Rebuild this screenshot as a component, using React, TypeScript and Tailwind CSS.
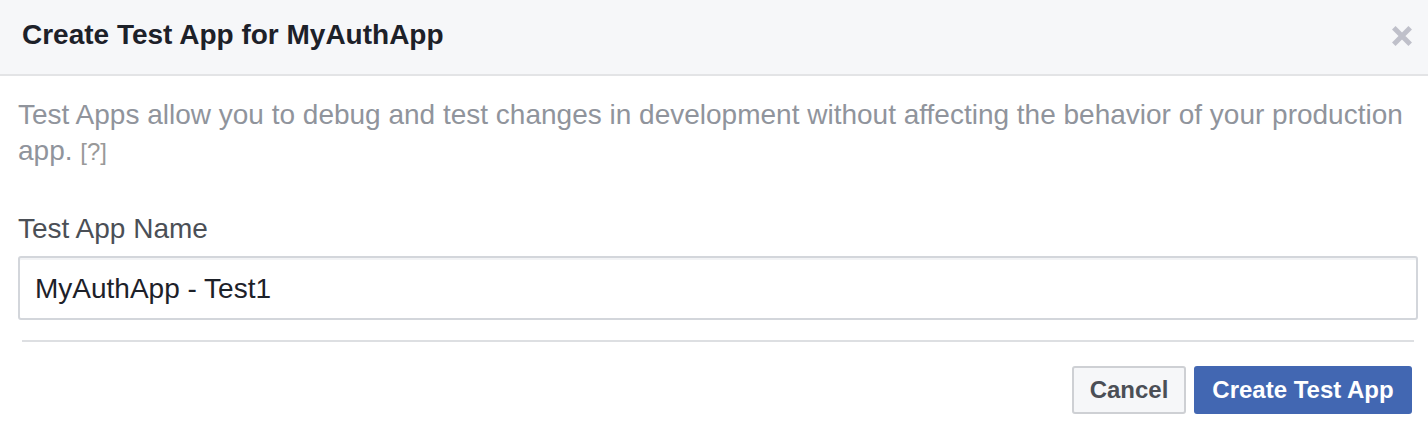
export default function App() {
  return (
    <main className="min-h-screen bg-white font-['Liberation_Sans',Arial,sans-serif] text-[28px]">
      <header className="flex h-19 items-center justify-between border-b-2 border-[#e3e4e6] bg-[#f6f7f9] pr-4 pb-1 pl-[22px]">
        <h1 className="text-[28px] font-bold text-[#1d2129]">Create Test App for MyAuthApp</h1>
        <button type="button" aria-label="Close" className="mt-0.5">
          <svg className="block" width="20" height="20" viewBox="0 0 20 20" fill="none" stroke="#bfc0ca" strokeWidth="5">
            <path d="M1.8 1.8 18.2 18.2M18.2 1.8 1.8 18.2" />
          </svg>
        </button>
      </header>
      <form className="pt-[21px]" onSubmit={(e) => e.preventDefault()}>
        <p className="px-[18px] leading-9 text-[#90949c]">
          Test Apps allow you to debug and test changes in development without affecting the behavior of your production app.{" "}
          <a href="#help" className="text-2xl leading-none text-[#999999]">[?]</a>
        </p>
        <div className="mt-[42px] pr-[10px] pl-[18px]">
          <label htmlFor="app-name" className="block leading-9 text-[#4b4f56]">Test App Name</label>
          <input id="app-name" type="text" defaultValue="MyAuthApp - Test1" className="mt-[9px] block h-16 w-full rounded-[3px] border-2 border-[#d3d6db] px-[15px] pt-0.5 text-[#1d2129] shadow-[inset_0_2px_0_#f2f3f5]" />
        </div>
        <div className="mt-5 mr-[14px] ml-[22px] border-t-2 border-[#dddfe2]" />
        <footer className="mt-6 flex justify-end gap-2 pr-4 text-2xl font-bold">
          <button type="button" className="h-12 min-w-[114px] rounded-[3px] border-2 border-[#ced0d4] bg-[#f6f7f9] px-3 text-[#4b4f56]">Cancel</button>
          <button type="submit" className="h-12 min-w-[218px] rounded-[3px] bg-[#4267b2] px-3 text-white">Create Test App</button>
        </footer>
      </form>
    </main>
  );
}
